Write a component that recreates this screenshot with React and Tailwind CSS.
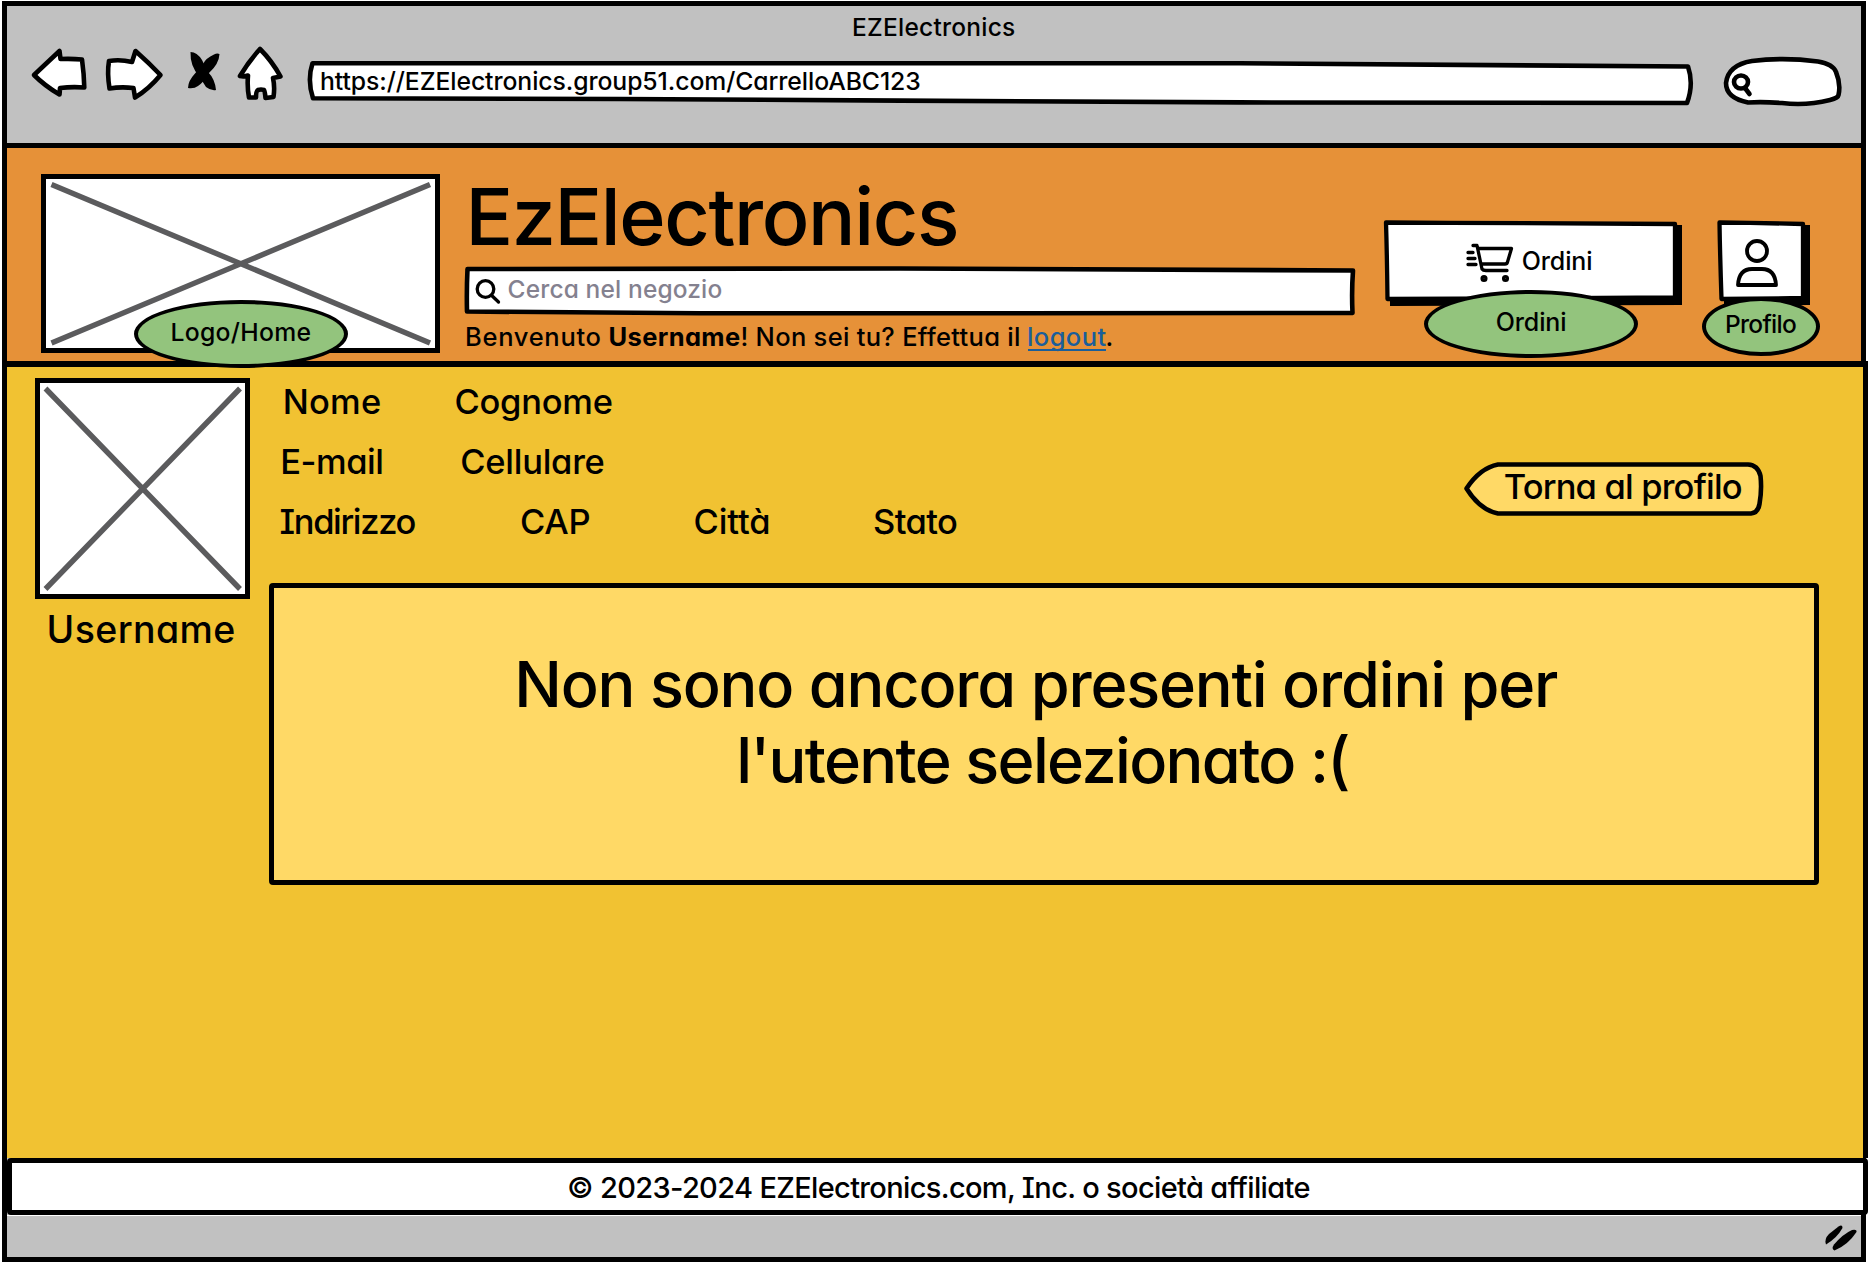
import React from "react";

function Label({ className = "", children }) {
  return (
    <div className={"shrink-0 whitespace-pre leading-none " + className}>{children}</div>
  );
}

function Sketch({ box, children, className = "" }) {
  const [, , w, h] = box;
  return (
    <svg
      viewBox={box.join(" ")}
      width={w}
      height={h}
      className={"shrink-0 " + className}
      fill="#fff"
      stroke="#000"
      strokeWidth="4.6"
      strokeLinejoin="round"
      strokeLinecap="round"
    >
      {children}
    </svg>
  );
}

function BrowserChrome() {
  return (
    <header className="flex h-[142px] shrink-0 flex-col border-b-5 border-black pt-[8.5px]">
      <div className="flex justify-center">
        <Label className="w-[162px] text-[24.5px] tracking-[0.24px] indent-[-1px]">EZElectronics</Label>
      </div>
      <div className="mt-[7px] flex pl-[23px]">
        <Sketch box={[30, 46, 58, 62]}>
          <path d="M34 75 L59.5 51 L60.5 59 Q72 58.5 82 59.5 Q84 74 84.3 87.5 Q72 86.5 60 88 L59.5 94.5 Q45 86 34 75Z" />
        </Sketch>
        <Sketch box={[103, 46, 63, 62]} className="ml-[15px]">
          <path d="M109 61 Q120 59 132 62 L135.5 51 Q149 63 160.5 75 Q149 89 135 97.5 L133.5 88 Q121 86.5 109.5 88.5 Q107 73 109 61Z" />
        </Sketch>
        <Sketch box={[186, 46, 35, 62]} className="ml-5">
          <g fill="#000" stroke="none">
            <path d="M190.5 52 Q197 52 202 60 L208 72 Q215 79 216 90 Q211 91 206 87 L199 76 Q190 66 190.5 52Z" />
            <path d="M214 54.5 Q206 58 203 64 L195 73.5 Q188 81 188 88 Q194 89 198 86 Q204 82 209 73 Q219 64 219.5 54 Q217 53 214 54.5Z" />
          </g>
        </Sketch>
        <Sketch box={[236, 46, 48, 62]} className="ml-[15px]">
          <path d="M260 49 Q249 61 240 76 Q244 77 248 75.5 Q247 87 249 97.5 L256 97.5 Q256 91 258 90 Q261 89 264 90 Q265 92 265.5 98 L273.5 97 Q275 87 273 78 L280.5 76.5 Q272 61 260 49Z" />
        </Sketch>
        <div className="relative ml-[22px] h-[62px] w-[1389px] shrink-0">
          <Sketch box={[306, 46, 1389, 62]}>
            <path d="M312.5 63.3 L1240 63.3 L1688 66.5 Q1694 84 1687 103 L1240 102.4 L900 100.6 L620 99 L313 98.3 Q307 80 312.5 63.3Z" />
          </Sketch>
          <Label className="absolute left-[15px] top-[23.3px] w-[599px] text-[24.75px] tracking-[-0.08px] indent-[-1px]">
            https://EZElectronics.group51.com/CarrelloABC123
          </Label>
        </div>
        <Sketch box={[1722, 46, 122, 62]} className="ml-[27px]">
          <path d="M1748 102.5 Q1726 98 1726 83 Q1728 65 1752 61 Q1784 57 1818 61.5 Q1833 64 1836 72 Q1841 84 1838.5 95 Q1838 98 1830 100 Q1806 106 1782 103 Q1762 101.5 1748 102.5Z" />
          <ellipse cx="1741" cy="82" rx="7" ry="6.5" fill="none" />
          <path d="M1745 88 L1749.5 94" />
        </Sketch>
      </div>
    </header>
  );
}

function StoreHeader() {
  return (
    <section className="relative z-10 flex h-[213px] shrink-0 bg-[#e69138]">
      <div className="relative ml-[33.5px] mt-[26px] h-[179px] w-[399.5px] shrink-0 border-5 border-black bg-white">
        <svg viewBox="0 0 389.5 169" className="size-full" stroke="#5b5b5d" strokeWidth="5.4">
          <path d="M5.5 5.5 L384 164 M384 5.5 L5.5 164" />
        </svg>
        <div className="absolute left-[88.5px] top-[121px] flex h-[68px] w-[214px] justify-center rounded-[50%] border-4 border-black bg-[#93c47d] pt-4">
          <Label className="w-[139px] text-[24.75px] tracking-[0.28px] indent-[-1px]">Logo/Home</Label>
        </div>
      </div>

      <div className="ml-[24px] w-[892px] shrink-0 pt-[28.8px]">
        <Label className="ml-[7.4px] w-[485px] text-[79px] tracking-[-1.37px] indent-[-6px]">EzElectronics</Label>
        <div className="relative mt-[10.2px] flex h-[50px]">
          <Sketch box={[464, 266, 892, 50]}>
            <path d="M467.5 269 L900 268.5 L1353 270.5 Q1351.5 291 1352.5 313 L900 313.3 L700 313.3 L467 311.5 Q466.5 290 467.5 269Z" />
            <g fill="none" strokeWidth="3.3">
              <circle cx="485.5" cy="289" r="8.3" />
              <path d="M491.7 295.5 L498.5 302" />
            </g>
          </Sketch>
          <Label className="absolute left-[44.6px] top-[11.3px] w-[213px] text-[24.5px] tracking-[0.14px] indent-[-1px] text-[#84818f]">
            Cerca nel negozio
          </Label>
        </div>
        <div className="ml-[2px] mt-[7.7px] flex">
          <Label className="w-[133.6px] text-[25.5px] tracking-[0.71px] indent-[-1px]">Benvenuto</Label>
          <Label className="ml-[10px] w-[130.4px] text-[25.5px] font-bold tracking-[0.35px] indent-[-1px]">Username</Label>
          <Label className="ml-[2.5px] w-[276.5px] text-[25.5px] tracking-[0.29px] indent-[-2px]">! Non sei tu? Effettua il</Label>
          <Label className="ml-[9px] w-[78.5px] border-b-2 border-[#1a5e9a] text-[25.5px] tracking-[0.42px] indent-[-1px] text-[#1a5e9a]">
            logout
          </Label>
          <Label className="ml-px w-[4px] text-[25.5px] indent-[-2px]">.</Label>
        </div>
      </div>

      <div className="relative ml-[26px] mt-[71px] h-[88px] w-[302px] shrink-0">
        <Sketch box={[1382, 219, 302, 88]}>
          <path d="M1390 225 H1682 V305 L1390 306Z" fill="#000" stroke="none" />
          <path d="M1386 222.5 L1450 222.8 L1675 224 V297.5 L1387.5 299Q1387 255 1386 222.5Z" strokeWidth="4.3" />
          <g fill="none" strokeWidth="3.3">
            <path d="M1473 245.5 H1477 L1482 269 Q1483 270.5 1486 270.5 H1507 M1479 248.5 H1511.5 L1507.5 262 Q1507 264 1505 264 H1482 M1468 252.5 H1473 M1468 258.5 H1475 M1468 264.5 H1476" />
            <circle cx="1484" cy="278.5" r="1.9" />
            <circle cx="1505.5" cy="278.5" r="1.9" />
          </g>
        </Sketch>
        <Label className="absolute left-[140.8px] top-[29.6px] w-[68.4px] text-[25px] tracking-[-0.15px] indent-[-1px]">Ordini</Label>
        <div className="absolute left-[42px] top-[71px] flex h-[68px] w-[214px] justify-center rounded-[50%] border-4 border-black bg-[#93c47d] pt-4">
          <Label className="w-[68.4px] text-[25px] tracking-[-0.15px] indent-[-1px]">Ordini</Label>
        </div>
      </div>

      <div className="relative ml-[32px] mt-[71px] h-[88px] w-[96px] shrink-0">
        <Sketch box={[1716, 219, 96, 88]}>
          <path d="M1724 225 H1810 V305 L1724 306Z" fill="#000" stroke="none" />
          <path d="M1719.5 222.5 L1750 222.8 L1803 224 V298 L1721.5 299Q1720 255 1719.5 222.5Z" strokeWidth="4.3" />
          <g fill="none" strokeWidth="3.8">
            <circle cx="1757" cy="251" r="10" />
            <path d="M1738 285 Q1739 269 1752 269 H1762 Q1775 269 1776 285Z" />
          </g>
        </Sketch>
        <div className="absolute left-[-14px] top-[78px] flex h-[59px] w-[118px] justify-center rounded-[50%] border-4 border-black bg-[#93c47d] pt-[11px]">
          <Label className="w-[70px] text-[24.5px] tracking-[-0.71px] indent-[-1px]">Profilo</Label>
        </div>
      </div>
    </section>
  );
}

function ProfilePage() {
  return (
    <main className="relative -ml-[5px] flex h-[797px] w-[1866px] shrink-0 border-x-5 border-t-6 border-black bg-[#f1c232]">
      <aside className="ml-[27.5px] mt-[11px] flex w-[215.5px] shrink-0 flex-col items-center">
        <div className="h-[221px] w-full border-5 border-black bg-white">
          <svg viewBox="0 0 205.5 211" className="size-full" stroke="#5b5b5d" strokeWidth="5.4">
            <path d="M5.5 5.5 L200 206 M200 5.5 L5.5 206" />
          </svg>
        </div>
        <Label className="mt-[12.3px] w-[185.5px] text-[37.5px] tracking-[0.4px] indent-[-3px]">Username</Label>
      </aside>

      <div className="ml-[18.5px] w-[1550.5px] shrink-0">
        <div className="flex h-[215.5px] justify-between">
          <div className="flex flex-col gap-[25.7px] pt-[17.5px] text-[34.5px]">
            <div className="flex pl-[16.2px]">
              <Label className="w-[95.3px] tracking-[0.24px] indent-[-2px]">Nome</Label>
              <Label className="ml-[75.5px] w-[156.2px] tracking-[-0.26px] indent-[-1px]">Cognome</Label>
            </div>
            <div className="flex pl-[13.8px]">
              <Label className="w-[100px] tracking-[-0.49px] indent-[-2px]">E-mail</Label>
              <Label className="ml-[79px] w-[142.3px] tracking-[-0.27px] indent-[-1px]">Cellulare</Label>
            </div>
            <div className="flex pl-[12.5px]">
              <Label className="w-[134px] tracking-[-1.36px] indent-[-1.5px]">Indirizzo</Label>
              <Label className="ml-[106px] w-[68.6px] tracking-[-0.2px] indent-[-1px]">CAP</Label>
              <Label className="ml-[105px] w-[74.5px] tracking-[-0.11px] indent-[-1px]">Città</Label>
              <Label className="ml-[105px] w-[83px] tracking-[-0.61px] indent-[-1px]">Stato</Label>
            </div>
          </div>
          <div className="relative mr-[54px] mt-[94px] h-[56px] w-[302px]">
            <Sketch box={[1463, 461, 302, 56]}>
              <path
                d="M1498 464.5 H1748 Q1758 465 1760.5 476 Q1762 490 1759.5 504 Q1758 513 1751 513.5 H1498 Q1480 510 1466.5 488.5 Q1480 468 1498 464.5Z"
                fill="#ffd966"
              />
            </Sketch>
            <Label className="absolute left-[41.7px] top-[8.5px] w-[237px] text-[34.5px] tracking-[-0.82px] indent-[-1px]">
              Torna al profilo
            </Label>
          </div>
        </div>
        <div className="flex h-[302.5px] flex-col items-center rounded-[4px] border-5 border-black bg-[#ffd966] pt-[65px] text-[63px]">
          <Label className="mr-[10px] w-[1040px] tracking-[-1.18px] indent-[-4.5px]">Non sono ancora presenti ordini per</Label>
          <Label className="mt-[13.7px] w-[609px] tracking-[-1.65px] indent-[-3px]">l'utente selezionato :(</Label>
        </div>
      </div>
    </main>
  );
}

export default function App() {
  return (
    <div className="h-[1264px] w-[1868px] overflow-hidden bg-white pl-[2px] pt-px font-medium text-black [font-family:Inter,sans-serif] [font-feature-settings:'cv11','cv08']">
      <div className="flex h-[1261px] w-[1864px] flex-col border-5 border-black bg-[#c1c1c1]">
        <BrowserChrome />
        <StoreHeader />
        <ProfilePage />
        <footer className="relative flex h-[57px] w-[1861px] shrink-0 justify-center rounded-[4px] border-5 border-black bg-white pt-[9.6px]">
          <Label className="ml-1 w-[741px] text-[29px] tracking-[-0.65px] indent-[-2px]">
            © 2023-2024 EZElectronics.com, Inc. o società affiliate
          </Label>
        </footer>
        <div className="flex grow justify-end border-t border-white pr-[3px] pt-[8px]">
          <Sketch box={[1824, 1225, 34, 28]}>
            <g fill="#000" stroke="none">
              <path d="M1838.5 1227.5 Q1842.5 1225 1842.5 1229 Q1837 1239 1826 1245.5 Q1824 1240 1829 1235Z" />
              <path d="M1852 1231 Q1857 1230 1856.5 1233 Q1848 1246 1834.5 1251.5 Q1831 1250 1834 1245.5 Q1843 1235 1852 1231Z" />
            </g>
          </Sketch>
        </div>
      </div>
    </div>
  );
}
